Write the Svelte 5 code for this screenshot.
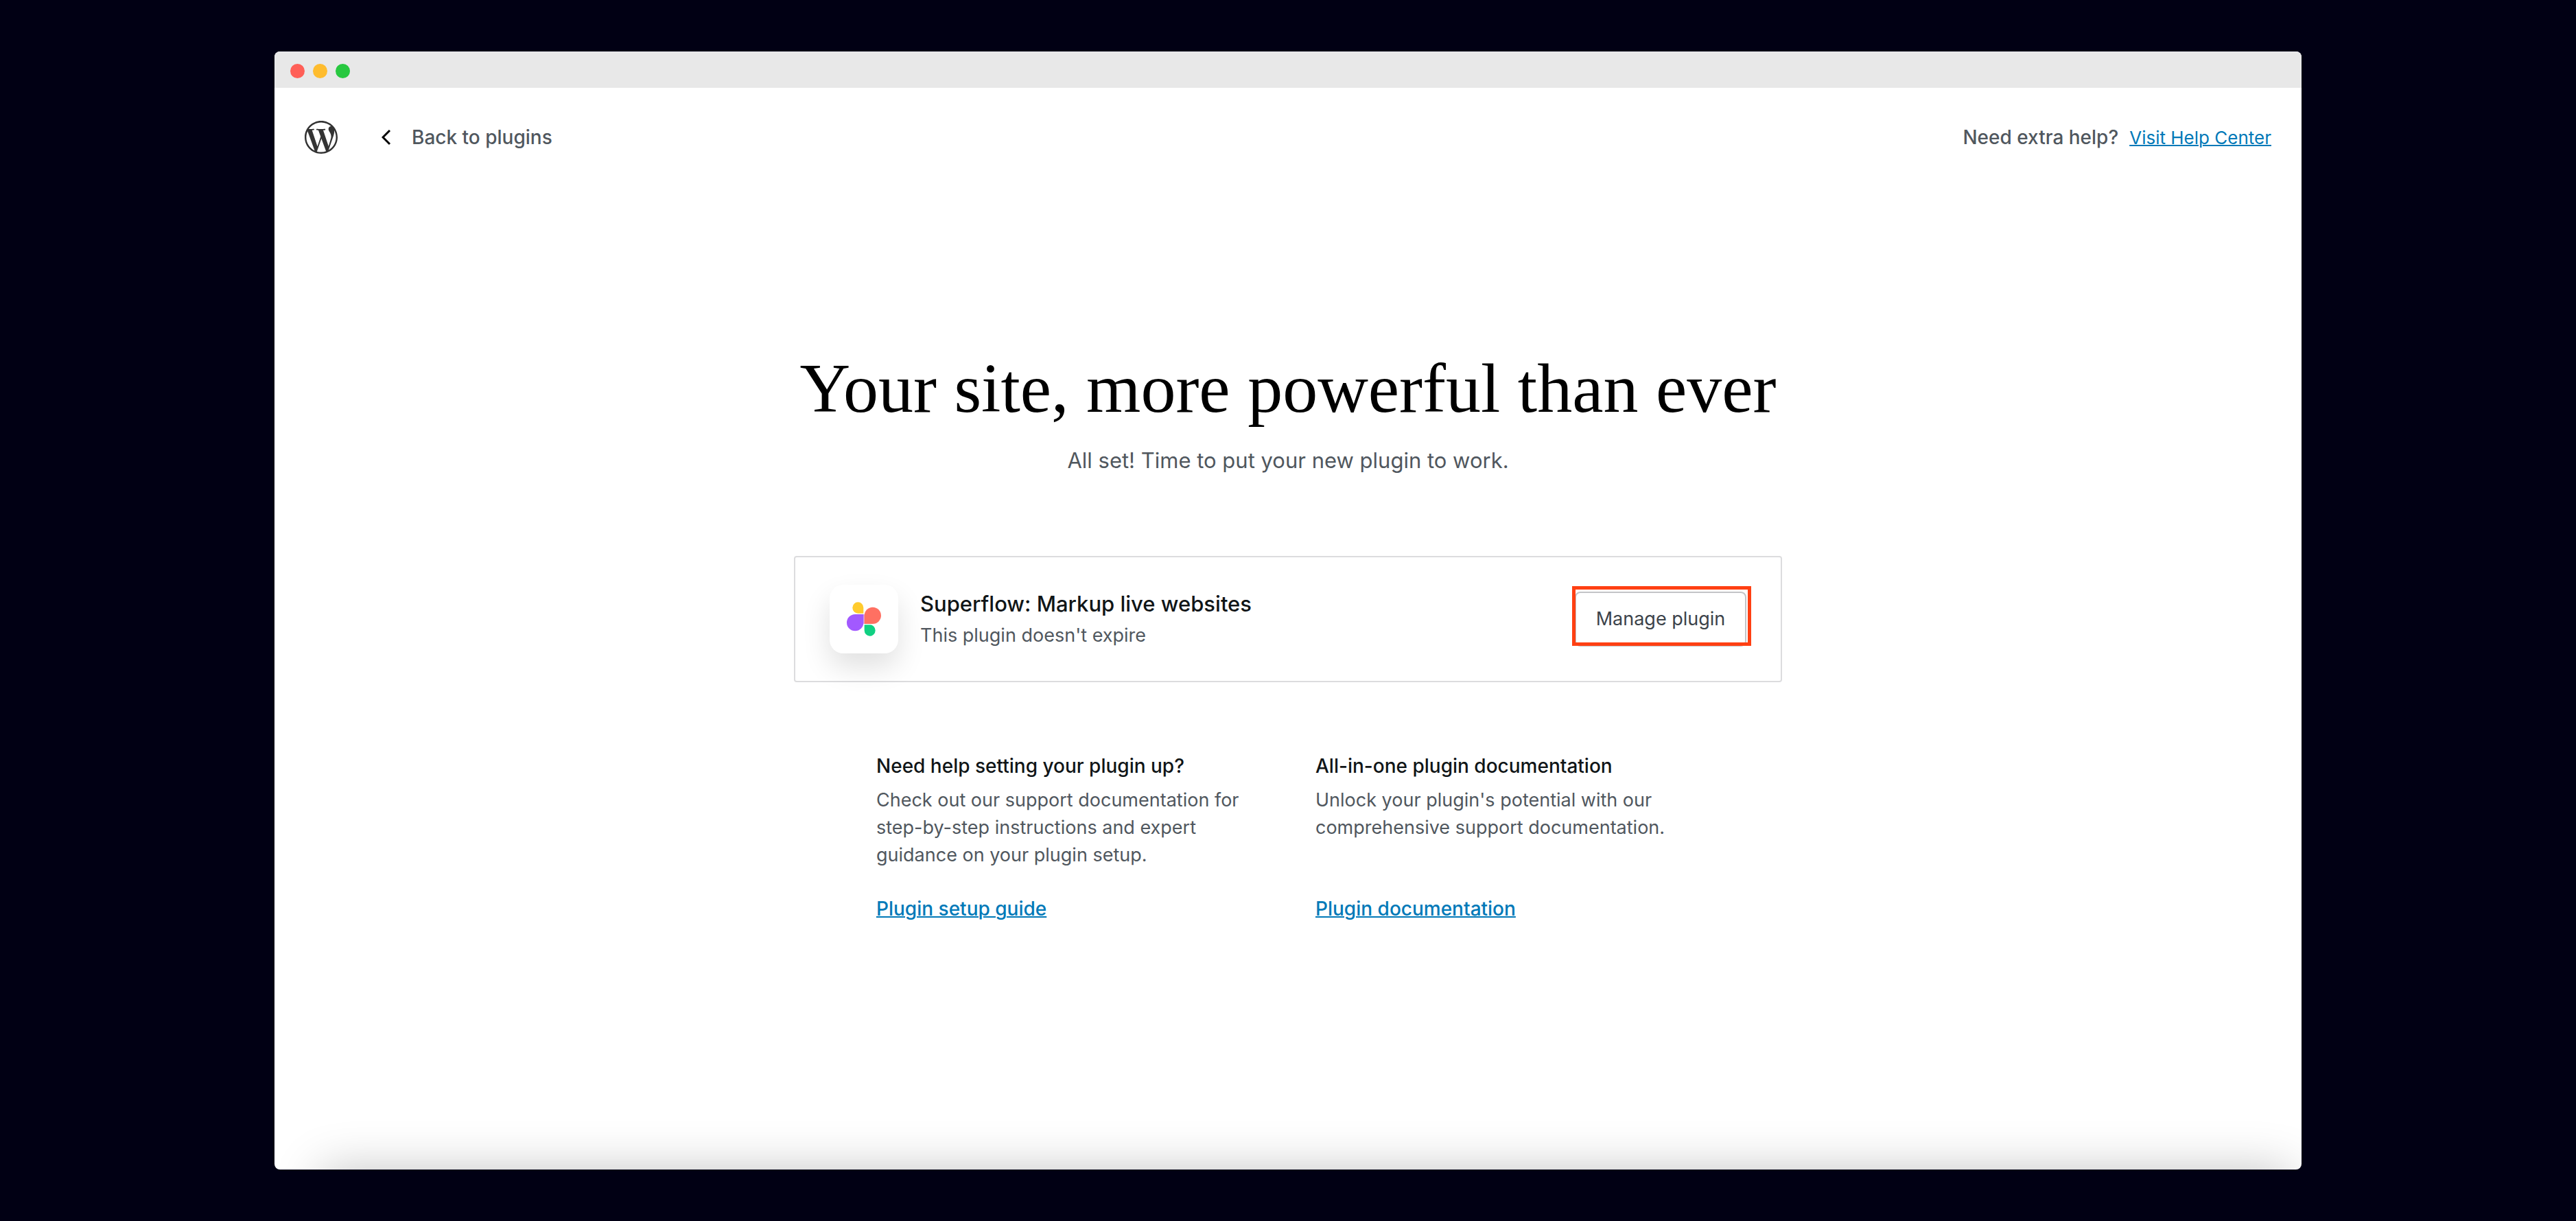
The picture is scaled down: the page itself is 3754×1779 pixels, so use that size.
<script>
  const guides = [
    {
      title: 'Need help setting your plugin up?',
      text: 'Check out our support documentation for step-by-step instructions and expert guidance on your plugin setup.',
      link: 'Plugin setup guide',
    },
    {
      title: 'All-in-one plugin documentation',
      text: "Unlock your plugin's potential with our comprehensive support documentation.",
      link: 'Plugin documentation',
    },
  ];
</script>

<div class="page">
  <div class="window">
    <div class="titlebar">
      <span class="dot close"></span>
      <span class="dot minimize"></span>
      <span class="dot zoom"></span>
    </div>

    <header>
      <svg class="logo" viewBox="0 0 24 24" role="img" aria-label="WordPress">
        <path
          d="M21.469 6.825c.84 1.537 1.318 3.3 1.318 5.175 0 3.979-2.156 7.456-5.363 9.325l3.295-9.527c.615-1.54.82-2.771.82-3.864 0-.405-.026-.78-.07-1.11m-7.981.105c.647-.03 1.232-.105 1.232-.105.582-.075.514-.93-.067-.899 0 0-1.755.135-2.88.135-1.064 0-2.85-.15-2.85-.15-.585-.03-.661.855-.075.885 0 0 .54.061 1.125.09l1.68 4.605-2.37 7.08L5.354 6.9c.649-.03 1.234-.1 1.234-.1.585-.075.516-.93-.065-.896 0 0-1.746.138-2.874.138-.2 0-.438-.008-.69-.015C4.911 3.15 8.235 1.215 12 1.215c2.809 0 5.365 1.072 7.286 2.833-.046-.003-.091-.009-.141-.009-1.06 0-1.812.923-1.812 1.914 0 .89.513 1.643 1.06 2.531.411.72.89 1.643.89 2.977 0 .915-.354 1.994-.821 3.479l-1.075 3.585-3.9-11.61.001.014zM12 22.784c-1.059 0-2.081-.153-3.048-.437l3.237-9.406 3.315 9.087c.024.053.05.101.078.149-1.12.393-2.325.609-3.582.609M1.211 12c0-1.564.336-3.05.935-4.39L7.29 21.709C3.694 19.96 1.212 16.271 1.211 12M12 0C5.385 0 0 5.385 0 12s5.385 12 12 12 12-5.385 12-12S18.615 0 12 0"
        />
      </svg>
      <a class="back" href="#plugins">
        <svg class="chevron" viewBox="0 0 14 24" aria-hidden="true"><path d="M12 2 2 12l10 10" /></svg>
        Back to plugins
      </a>
      <p class="help">
        Need extra help?
        <a href="#help">Visit Help Center</a>
      </p>
    </header>

    <main>
      <h1>Your site, more powerful than ever</h1>
      <p class="subtitle">All set! Time to put your new plugin to work.</p>

      <section class="card">
        <div class="tile">
          <svg viewBox="0 0 300 300" aria-hidden="true">
            <path fill="#dfb0e4" d="M147 129h6v42h-6z" />
            <path fill="#ffcb2d" d="M148 125V100.500a24 24.500 0 1 0-24 24.500z" />
            <path fill="#ff7062" d="M152 171v-36.500a36.500 36.500 0 1 1 36.500 36.500z" />
            <path fill="#a259ff" d="M148 129v36.500a36.500 36.500 0 1 1-36.500-36.500z" />
            <path fill="#10d082" d="M152 175h24a24 24.500 0 1 1-24 24.500z" />
          </svg>
        </div>
        <div class="info">
          <h2>Superflow: Markup live websites</h2>
          <p>This plugin doesn't expire</p>
        </div>
        <div class="action">
          <button type="button">Manage plugin</button>
          <span class="highlight"></span>
        </div>
      </section>

      <section class="guides">
        {#each guides as guide}
          <article>
            <h3>{guide.title}</h3>
            <p>{guide.text}</p>
            <a href="#docs">{guide.link}</a>
          </article>
        {/each}
      </section>
    </main>
  </div>
</div>

<style>
  :global(body) {
    background: #010014;
  }

  .page {
    box-sizing: border-box;
    min-height: 100vh;
    display: flex;
    padding: 75px clamp(24px, 11vw, 400px);
    background: #010014;
    color: #50575e;
    font: 400 27px/40px Inter, 'Liberation Sans', sans-serif;
  }

  h1, h2, h3, p {
    margin: 0;
  }

  a {
    color: #0079b8;
    text-decoration-thickness: 2px;
  }

  .window {
    position: relative;
    flex: 1;
    min-width: 0;
    overflow: hidden;
    border-radius: 8px;
    background: #fff;
  }

  /* soft shade along the bottom edge */
  .window::after {
    content: '';
    position: absolute;
    top: 100%;
    left: 68px;
    right: 16px;
    height: 100px;
    box-shadow: 0 0 70px rgba(0, 0, 0, 0.23);
  }

  .titlebar {
    display: flex;
    align-items: center;
    gap: 12px;
    height: 53px;
    padding: 3px 23px 0;
    box-sizing: border-box;
    background: #e8e8e8;
  }

  .dot {
    width: 21px;
    height: 21px;
    border-radius: 50%;
  }

  .close { background: #ff5f57; }
  .minimize { background: #febc2e; }
  .zoom { background: #28c840; }

  header {
    display: flex;
    align-items: center;
    flex-wrap: wrap;
    gap: 64px;
    padding: 48px 44px;
    font-size: 28px;
    font-weight: 500;
  }

  .logo {
    width: 48px;
    height: 48px;
    fill: #333;
  }

  .back {
    display: flex;
    align-items: center;
    gap: 30px;
    color: #50575e;
    text-decoration: none;
  }

  .chevron {
    width: 14px;
    height: 24px;
    fill: none;
    stroke: #000;
    stroke-width: 3;
  }

  .help {
    display: flex;
    align-items: baseline;
    gap: 16px;
    margin-left: auto;
  }

  .help a {
    font-size: 26px;
    font-weight: 400;
  }

  main {
    max-width: 1440px;
    margin: 0 auto;
    padding: 236px 24px 100px;
  }

  h1 {
    color: #000;
    font: 400 102px/116px 'Liberation Serif', serif;
    text-align: center;
  }

  .subtitle {
    margin-top: 23px;
    font-size: 31px;
    line-height: 48px;
    text-align: center;
  }

  .card {
    display: flex;
    align-items: center;
    gap: 32px;
    margin-top: 115px;
    padding: 40px 50px;
    border: 2px solid #dcdcde;
    border-radius: 4px;
  }

  .tile {
    flex: none;
    width: 100px;
    height: 100px;
    border-radius: 20px;
    background: #fff;
    box-shadow: 0 20px 40px rgba(0, 0, 0, 0.12);
  }

  .tile svg {
    display: block;
  }

  .info {
    display: grid;
    gap: 4px;
    flex: 1;
  }

  h2 {
    color: #101517;
    font-size: 31px;
    font-weight: 500;
    line-height: 44px;
  }

  .action {
    position: relative;
  }

  button {
    display: block;
    min-width: 250px;
    height: 80px;
    padding: 0 28px;
    border: 2px solid #c3c4c7;
    border-radius: 8px;
    background: #fff;
    color: #3c434a;
    font: inherit;
  }

  .highlight {
    position: absolute;
    inset: -8px -7px 1px -4px;
    border: 5px solid #ff4013;
    pointer-events: none;
  }

  .guides {
    display: grid;
    grid-template-columns: 1fr 1fr;
    gap: 80px;
    max-width: 1200px;
    margin: 102px auto 0;
  }

  article {
    display: flex;
    flex-direction: column;
    align-items: flex-start;
  }

  h3 {
    margin-bottom: 10px;
    color: #101517;
    font-size: 28px;
    font-weight: 500;
    line-height: 40px;
  }

  article p {
    margin-bottom: 38px;
  }

  article a {
    margin-top: auto;
    font-size: 28px;
    font-weight: 500;
  }
</style>
